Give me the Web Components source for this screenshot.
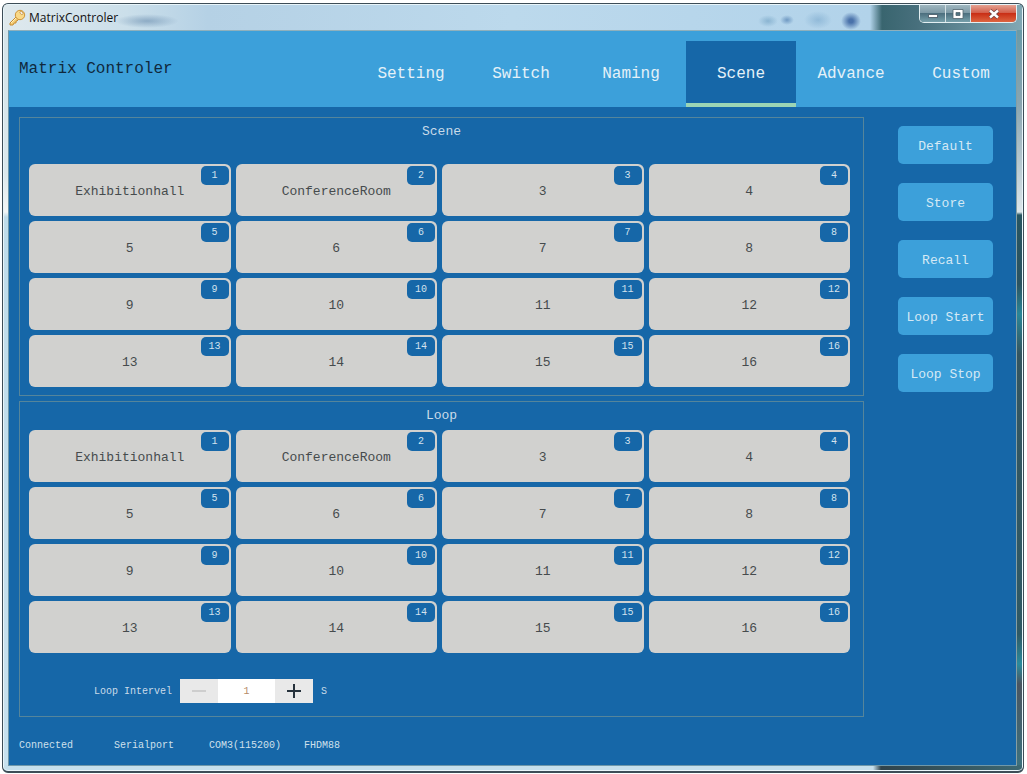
<!DOCTYPE html>
<html lang="en">
<head>
<meta charset="utf-8">
<title>MatrixControler</title>
<style>
html { background: #fff; }
body { margin: 0; font-family: "Liberation Mono", monospace; font-size: 13px; }
</style>
</head>
<body>
<matrix-app></matrix-app>
<script>
const define = (name, html, setup) => customElements.define(name, class extends HTMLElement {
  constructor() {
    super();
    const t = document.createElement('template');
    t.innerHTML = html;
    this.attachShadow({ mode: 'open' }).appendChild(t.content.cloneNode(true));
  }
  connectedCallback() { if (setup) setup(this, this.shadowRoot); }
});

define('app-window', `
<style>
:host { display: block; box-sizing: border-box; min-height: 100vh; padding: 3px 3px 2px 2px; }
.frame { box-sizing: border-box; min-height: calc(100vh - 5px); display: flex; flex-direction: column;
  padding: 0 6px 5px 5px; border: 1px solid #3d4d57; border-bottom-width: 2px; border-radius: 6px; overflow: hidden;
  background:
    linear-gradient(90deg, #c5dfec calc(100% - 150px), #30434b calc(100% - 142px), #3c6872) bottom / 100% 6px no-repeat,
    linear-gradient(#5e97a5, #8aa5b0 100px, #dce6ea 208px, #275561 211px, #2b5360 280px, #2a8698 310px, #34555f 350px, #2f5964 630px, #2a8b9d 660px, #4b5560 680px, #3b7380) right / 8px 100% no-repeat,
    linear-gradient(#d3e3e9, #dce8ec 170px, #f3f6f6 208px, #bfdcea 213px, #c8e1ee) left / 8px 100% no-repeat,
    #c2dceb;
  box-shadow: inset 0 0 0 1px #e8f5fa; }
.client { flex: 1; display: flex; flex-direction: column; background: #1667a8; border: 1px solid #6f98aa; border-top-color: #8fb0bc; border-right-color: #869ea3; }
</style>
<div class="frame"><slot name="title"></slot><div class="client"><slot></slot></div></div>`);

define('title-bar', `
<style>
:host { display: flex; height: 25px; margin: 1px -5px 0 -4px; justify-content: space-between; align-items: flex-start; font: 12px "Open Sans", sans-serif; color: #111;
  background:
    radial-gradient(ellipse, #7193b3aa, #7193b300 70%) 111px 9px / 64px 14px no-repeat,
    radial-gradient(ellipse, #6e9fc199, #6e9fc100 70%) 754px 10px / 20px 12px no-repeat,
    radial-gradient(ellipse, #5583b4bb, #5583b400 70%) 776px 10px / 14px 10px no-repeat,
    radial-gradient(ellipse, #7ba9cd99, #7ba9cd00 70%) 800px 6px / 28px 18px no-repeat,
    radial-gradient(ellipse, #4a72aa 15%, #4a72aa00 70%) 837px 7px / 20px 18px no-repeat,
    linear-gradient(90deg, #dfe9ed, #cbdfea 12%, #b5d1e5 20%, #bcd9ec 50%, #b2d3ea calc(100% - 152px), #39656f calc(100% - 140px), #476f7c calc(100% - 106px), #81a8b4); }
.name { display: flex; align-items: center; gap: 3px; height: 25px; padding-left: 5px; }
.controls { display: flex; border: 1px solid #e3eff2; border-top: 0; border-radius: 0 0 5px 5px; overflow: hidden; margin-right: 5px; }
button { display: grid; place-items: center; width: 26px; height: 17px; padding: 0; border: 0; border-right: 1px solid #d3e0e4;
  background: linear-gradient(#9fb7c0, #7e9aa6 45%, #4d707f 50%, #77a0ab); }
.max { width: 25px; }
.close { width: 45px; border: 0; background: linear-gradient(#e5a292, #d3604c 45%, #c92f16 50%, #dd6540); }
</style>
<div class="name">
<svg width="17" height="17" viewBox="0 0 17 17" aria-hidden="true"><path d="M8 7L1 14v2h3l1-2h2v-2h1l2-2z" fill="#f4cd76" stroke="#c78c31"/><circle cx="11" cy="6" r="4.7" fill="#f9d988" stroke="#ce9438"/><path d="M7 9L2 14" stroke="#fff0bd"/><ellipse cx="12.5" cy="4" rx="1.8" ry="1.2" transform="rotate(40 12.5 4)" fill="#fff" stroke="#b98435" stroke-width=".7"/></svg>
<span><slot></slot></span></div>
<div class="controls">
<button aria-label="Minimize"><svg width="12" height="12"><rect x="1.5" y="6.5" width="9" height="3" fill="#fff" stroke="#576975"/></svg></button>
<button class="max" aria-label="Maximize"><svg width="12" height="12"><path d="M1 1.5h10v9H1zM4 4.5v3h4v-3z" fill="#fff" fill-rule="evenodd" stroke="#52646f" stroke-width=".8"/></svg></button>
<button class="close" aria-label="Close"><svg width="12" height="12"><path d="M2 2.5l8 7M10 2.5l-8 7" stroke="#6f4545" stroke-width="4"/><path d="M2 2.5l8 7M10 2.5l-8 7" stroke="#fff" stroke-width="2.4"/></svg></button>
</div>`);

define('nav-tab', `
<style>
:host { display: block; width: 110px; }
button { width: 100%; height: 66px; padding: 4px 0 0; border: 0; border-bottom: 4px solid transparent; background: none; color: #e4f1f8; font: 16px "Liberation Mono", monospace; }
:host([active]) button { background: #1667a8; border-color: #9bd5b5; }
</style><button><slot></slot></button>`);

define('app-header', `
<style>
:host { display: flex; justify-content: space-between; align-items: flex-end; height: 76px; background: #3ca0da; color: #10293d; font-size: 16px; }
h1 { margin: 0; padding: 0 0 0 10px; align-self: center; font: inherit; }
nav { display: flex; }
</style><h1>Matrix Controler</h1><nav><slot></slot></nav>`);

define('scene-cell', `
<style>
:host { display: block; }
button { position: relative; display: block; width: 100%; height: 52px; padding: 2px 0 0; border: 0; border-radius: 6px; background: #d1d1cf; color: #464b4d; font: 13px "Liberation Mono", monospace; }
.badge { position: absolute; top: 2px; right: 2px; width: 28px; height: 19px; border-radius: 5px; background: #1667a8; color: #d2e2ee; font-size: 10px; line-height: 19px; }
</style><button><slot></slot><span class="badge"></span></button>`,
(el, root) => { root.querySelector('.badge').textContent = el.getAttribute('number'); });

define('scene-panel', `
<style>
:host { display: block; border: 1px solid #55859b; padding: 0 13px 8px 9px; color: #c9dbe8; }
h2 { margin: 0 -4px 0 0; height: var(--title-height, 46px); font: 13px/28px "Liberation Mono", monospace; text-align: center; }
.grid { display: grid; grid-template-columns: repeat(4, 1fr); gap: 5px; }
</style><h2></h2><div class="grid"></div><slot></slot>`,
(el, root) => {
  root.querySelector('h2').textContent = el.getAttribute('heading');
  const names = ['Exhibitionhall', 'ConferenceRoom'];
  for (let i = 1; i <= 16; i++) {
    const cell = document.createElement('scene-cell');
    cell.setAttribute('number', i);
    cell.textContent = names[i - 1] || i;
    root.querySelector('.grid').append(cell);
  }
});

define('interval-stepper', `
<style>
:host { display: flex; align-items: center; gap: 8px; margin-top: 26px; padding: 0 0 5px 65px; font-size: 10px; }
label { white-space: nowrap; }
.box { display: flex; height: 24px; }
button { display: grid; place-items: center; width: 38px; padding: 0; border: 0; background: #e9e9e9; }
input { box-sizing: border-box; width: 57px; padding: 0; border: 0; background: #fff; color: #b58b67; text-align: center; font: 10px "Liberation Mono", monospace; }
</style>
<label for="interval">Loop Intervel</label>
<div class="box">
<button aria-label="Decrease"><svg width="14" height="14"><path d="M0 7h14" stroke="#c5c5c5" stroke-width="1.5"/></svg></button>
<input id="interval" value="1">
<button aria-label="Increase"><svg width="14" height="14"><path d="M0 7h14M7 0v14" stroke="#26323c" stroke-width="2"/></svg></button>
</div><span>S</span>`);

define('action-button', `
<style>
:host { display: block; }
button { width: 95px; height: 38px; padding: 2px 0 0; border: 0; border-radius: 5px; background: #3ca0da; color: #d5e9f5; font: 13px "Liberation Mono", monospace; white-space: nowrap; }
</style><button><slot></slot></button>`);

define('status-bar', `
<style>
:host { display: grid; grid-template-columns: repeat(4, 95px); padding: 21px 10px 11px; line-height: 16px; font-size: 10px; color: #cfe0ec; }
</style><slot></slot>`);

define('matrix-app', `
<style>
:host { display: block; }
main { display: flex; gap: 34px; padding: 10px 23px 0 10px; }
.panels { flex: 1; display: grid; gap: 5px; }
.loop { --title-height: 28px; }
aside { display: flex; flex-direction: column; gap: 19px; padding-top: 9px; }
</style>
<app-window>
<title-bar slot="title">MatrixControler</title-bar>
<app-header><nav-tab>Setting</nav-tab><nav-tab>Switch</nav-tab><nav-tab>Naming</nav-tab><nav-tab active>Scene</nav-tab><nav-tab>Advance</nav-tab><nav-tab>Custom</nav-tab></app-header>
<main>
<div class="panels">
<scene-panel heading="Scene"></scene-panel>
<scene-panel class="loop" heading="Loop"><interval-stepper></interval-stepper></scene-panel>
</div>
<aside><action-button>Default</action-button><action-button>Store</action-button><action-button>Recall</action-button><action-button>Loop Start</action-button><action-button>Loop Stop</action-button></aside>
</main>
<status-bar><span>Connected</span><span>Serialport</span><span>COM3(115200)</span><span>FHDM88</span></status-bar>
</app-window>`);
</script>
</body>
</html>
